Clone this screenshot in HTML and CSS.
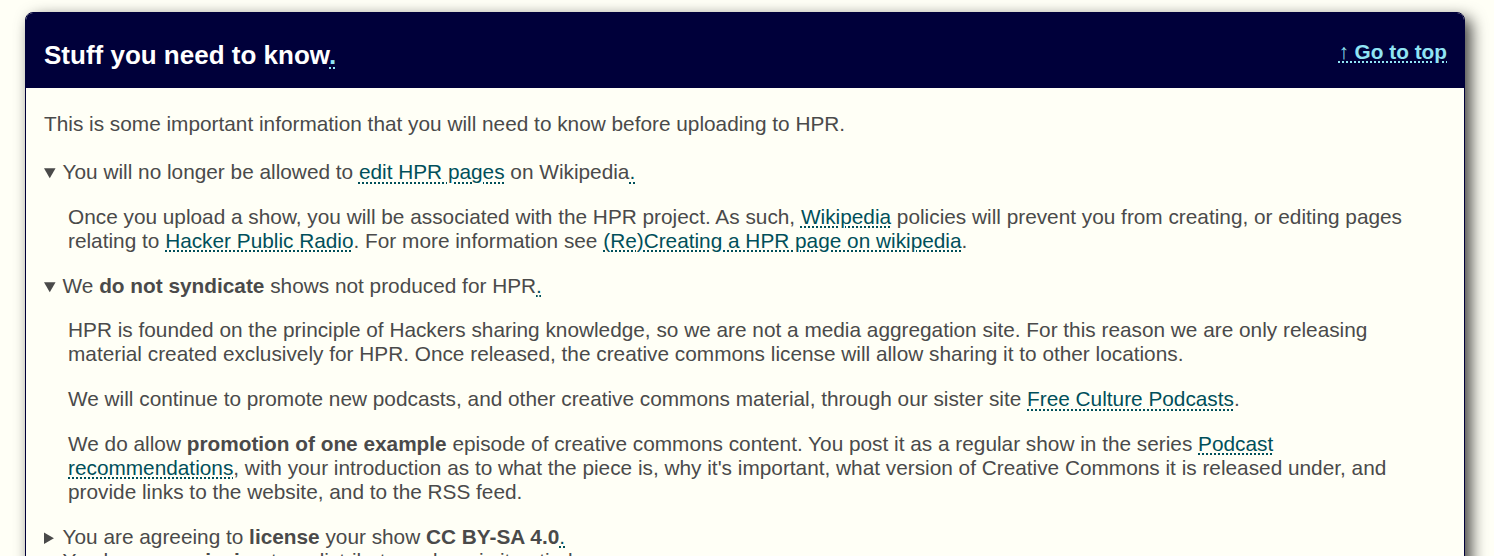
FILE: index.html
```html
<!DOCTYPE html>
<html lang="en">
<head>
  <meta charset="UTF-8">
  <meta name="viewport" content="width=device-width, initial-scale=1.0">
  <title>Hacker Public Radio - Upload</title>
  <link rel="stylesheet" href="styles.css">
</head>
<body>
  <section class="card" id="stuff">
    <header class="card-header">
      <h2>Stuff you need to know<a class="anchor" href="#stuff">.</a></h2>
      <a class="top-link" href="#top">↑ Go to top</a>
    </header>

    <div class="card-body">
      <p class="intro">This is some important information that you will need to know before uploading to HPR.</p>

      <details open>
        <summary>You will no longer be allowed to <a href="#">edit HPR pages</a> on Wikipedia<a href="#">.</a></summary>
        <p>Once you upload a show, you will be associated with the HPR project. As such, <a href="#">Wikipedia</a> policies will prevent you from creating, or editing pages relating to <a href="#">Hacker Public Radio</a>. For more information see <a href="#">(Re)Creating a HPR page on wikipedia</a>.</p>
      </details>

      <details open>
        <summary>We <strong>do not syndicate</strong> shows not produced for HPR<a href="#">.</a></summary>
        <p>HPR is founded on the principle of Hackers sharing knowledge, so we are not a media aggregation site. For this reason we are only releasing material created exclusively for HPR. Once released, the creative commons license will allow sharing it to other locations.</p>
        <p>We will continue to promote new podcasts, and other creative commons material, through our sister site <a href="#">Free Culture Podcasts</a>.</p>
        <p>We do allow <strong>promotion of one example</strong> episode of creative commons content. You post it as a regular show in the series <a href="#">Podcast recommendations</a>, with your introduction as to what the piece is, why it's important, what version of Creative Commons it is released under, and provide links to the website, and to the RSS feed.</p>
      </details>

      <details>
        <summary>You are agreeing to <strong>license</strong> your show <strong>CC BY-SA 4.0</strong><a href="#">.</a></summary>
        <p>Your show will be released under a Creative Commons Attribution-ShareAlike 4.0 license.</p>
      </details>

      <details>
        <summary>You have <strong>permission</strong> to redistribute and remix it entirely<a href="#">.</a></summary>
        <p>Anyone may share your show.</p>
      </details>
    </div>
  </section>
</body>
</html>
```

FILE: styles.css
```css
* {
  box-sizing: border-box;
}

body {
  margin: 0;
  padding: 12px 29px 0 25px;
  background: #fffff6;
  font-family: 'Liberation Sans', Arial, sans-serif;
  font-size: 20.8px;
  color: #4a4a4a;
}

a {
  color: #004f5a;
  text-decoration: underline dotted 2px;
  text-underline-offset: 3px;
}

.card {
  background: #fffff6;
  border: 1px solid #00003a;
  border-radius: 8px 8px 0 0;
  box-shadow: 6px 6px 16px rgba(0, 0, 0, 0.75);
}

.card-header {
  display: flex;
  align-items: center;
  justify-content: space-between;
  background: #00003a;
  border-radius: 7px 7px 0 0;
  height: 75px;
  padding: 6px 17px 0 18px;
}

.card-header h2 {
  margin: 4px 0 0;
  color: #fff;
  font-size: 26px;
  font-weight: bold;
}

.card-header a {
  color: #90e4f4;
}

.top-link {
  font-weight: bold;
  font-size: 20.8px;
  margin-bottom: 4px;
}

.card-body {
  padding: 4px 17px 0 18px;
}

.card-body p {
  margin: 20.8px 24px;
}

.card-body .intro {
  margin: 20px 0 24px;
}

details > summary {
  cursor: pointer;
}

details > summary::marker {
  font-size: 17.5px;
}

details[open] {
  margin-bottom: 20px;
}
```
